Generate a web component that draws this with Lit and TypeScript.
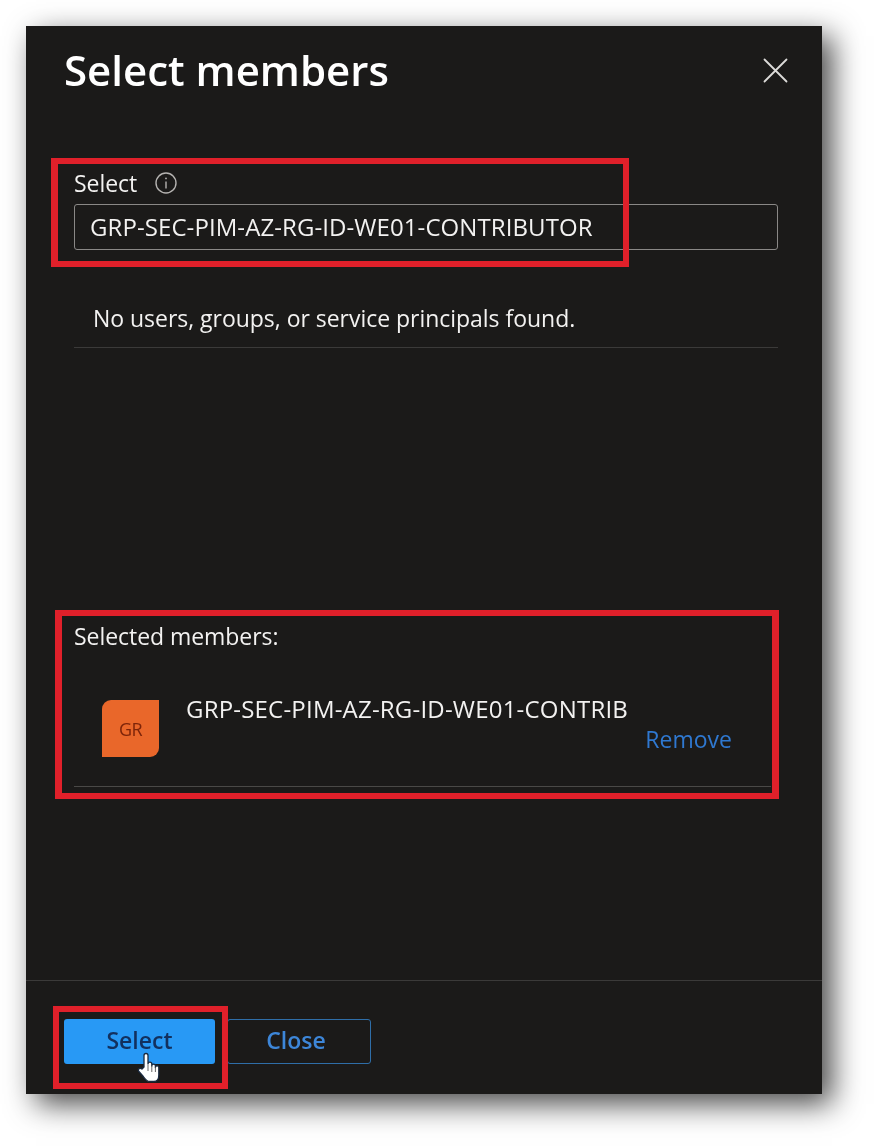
import { LitElement, html, css } from "lit";
import { customElement } from "lit/decorators.js";

@customElement("app-root")
export class AppRoot extends LitElement {
  static styles = css`
    :host {
      display: block;
      background: #fff;
      padding: 26px 52px 52px 26px;
      font-family: "Open Sans", "Noto Sans", sans-serif;
      color: #f3f2f1;
    }
    .panel {
      position: relative;
      height: 1068px;
      display: flex;
      flex-direction: column;
      background: #1b1a19;
      box-shadow: 10px 10px 28px rgba(0, 0, 0, 0.72);
      filter: blur(0.35px);
    }
    .header {
      display: flex;
      align-items: center;
      justify-content: space-between;
      height: 56px;
      margin-top: 16px;
      padding: 0 34px 0 38px;
    }
    h1 {
      margin: 0;
      font-size: 42px;
      line-height: 56px;
      font-weight: 600;
      color: #fff;
    }
    .x {
      display: block;
      width: 25px;
      height: 25px;
    }
    .body {
      flex: 1;
      display: flex;
      flex-direction: column;
      padding: 0 44px 0 48px;
    }
    .label {
      display: flex;
      align-items: center;
      gap: 17px;
      margin-top: 73px;
      height: 24px;
      font-size: 23px;
      line-height: 24px;
      letter-spacing: -0.05px;
    }
    .info {
      display: block;
      width: 24px;
      height: 24px;
    }
    .input {
      box-sizing: border-box;
      height: 46px;
      margin-top: 9px;
      display: flex;
      align-items: center;
      padding: 0 15px 2px;
      border: 1px solid #8a8886;
      border-radius: 3px;
      font-size: 24px;
      letter-spacing: 0.08px;
      white-space: nowrap;
    }
    .empty {
      box-sizing: border-box;
      height: 98px;
      display: flex;
      align-items: center;
      padding: 38px 0 0 19px;
      border-bottom: 1px solid #3b3a39;
      font-size: 23px;
      letter-spacing: -0.03px;
    }
    .selected {
      margin-top: 275px;
      height: 26px;
      font-size: 23px;
      line-height: 26px;
      letter-spacing: -0.05px;
    }
    .member {
      box-sizing: border-box;
      height: 138px;
      margin-right: 7px;
      display: flex;
      padding: 51px 39px 0 28px;
      border-bottom: 1px solid #4a4947;
    }
    .avatar {
      flex: none;
      width: 57px;
      height: 57px;
      display: flex;
      align-items: center;
      justify-content: center;
      background: #e9672a;
      border-radius: 9px 0 9px 0;
      color: #7c2409;
      font-size: 18px;
      letter-spacing: -0.5px;
    }
    .info-col {
      flex: 1;
      display: flex;
      flex-direction: column;
      margin-left: 27px;
    }
    .name {
      margin-top: -5px;
      font-size: 24px;
      line-height: 28px;
      letter-spacing: 0.2px;
      white-space: nowrap;
    }
    .remove {
      align-self: flex-end;
      margin-top: 2px;
      font-size: 23px;
      line-height: 28px;
      color: #2f78d0;
    }
    .footer {
      box-sizing: border-box;
      height: 114px;
      flex: none;
      display: flex;
      padding: 38px 0 0 38px;
      border-top: 1px solid #3b3a39;
    }
    .btn {
      box-sizing: border-box;
      height: 45px;
      display: flex;
      align-items: center;
      justify-content: center;
      padding-bottom: 3px;
      border-radius: 3px;
      font-size: 23px;
      font-weight: 600;
    }
    .primary {
      width: 151px;
      background: #2899f5;
      color: #12305e;
    }
    .secondary {
      width: 144px;
      margin-left: 12px;
      padding-right: 6px;
      border: 1px solid #2f6ea8;
      color: #3d86d8;
    }
    .mark {
      position: absolute;
      box-sizing: border-box;
      border: 6px solid #e0202a;
    }
    .m1 {
      left: 25px;
      top: 132px;
      width: 578px;
      height: 109px;
      border-left-width: 7px;
    }
    .m2 {
      left: 29px;
      top: 584px;
      width: 724px;
      height: 189px;
      border-left-width: 7px;
      border-right-width: 7px;
    }
    .m3 {
      left: 27px;
      top: 980px;
      width: 175px;
      height: 83px;
    }
    .hand {
      position: absolute;
      left: 110px;
      top: 1024px;
      width: 28px;
      height: 34px;
    }
  `;

  render() {
    return html`
      <div class="panel">
        <div class="header">
          <h1>Select members</h1>
          <svg class="x" viewBox="0 0 25 25" fill="none" stroke="#dddcda" stroke-width="1.8" stroke-linecap="round">
            <path d="M1.5 1.5 23.5 23.5M23.5 1.5 1.5 23.5" />
          </svg>
        </div>
        <div class="body">
          <div class="label">
            <span>Select</span>
            <svg class="info" viewBox="0 0 24 24" fill="none" stroke="#b5b3b1" stroke-width="1.4">
              <circle cx="12" cy="12" r="10" />
              <path d="M12 10.5V17.5" />
              <circle cx="12" cy="7.4" r="0.9" fill="#b5b3b1" stroke="none" />
            </svg>
          </div>
          <div class="input">GRP-SEC-PIM-AZ-RG-ID-WE01-CONTRIBUTOR</div>
          <div class="empty">No users, groups, or service principals found.</div>
          <div class="selected">Selected members:</div>
          <div class="member">
            <div class="avatar">GR</div>
            <div class="info-col">
              <div class="name">GRP-SEC-PIM-AZ-RG-ID-WE01-CONTRIB</div>
              <div class="remove">Remove</div>
            </div>
          </div>
        </div>
        <div class="footer">
          <div class="btn primary">Select</div>
          <div class="btn secondary">Close</div>
        </div>
        <div class="mark m1"></div>
        <div class="mark m2"></div>
        <div class="mark m3"></div>
        <svg class="hand" viewBox="0 0 28 34">
          <path
            d="M8 17V5.5a2 2 0 0 1 4 0V14a1.9 1.9 0 0 1 3.8 0v2a1.8 1.8 0 0 1 3.6 0v1.5a1.7 1.7 0 0 1 3.4 0V25c0 4-2 6.5-5 6.5h-4c-3 0-4.5-2-6.5-5L2.500 21c-1-1.800 1.500-3.800 3.500-2Z"
            fill="#fff"
            stroke="#1a2a40"
            stroke-width="1.3"
            stroke-linejoin="round"
          />
          <path d="M12 15v6M15.800 16v6M19.400 17v5" fill="none" stroke="#555" stroke-width="0.9" />
        </svg>
      </div>
    `;
  }
}
